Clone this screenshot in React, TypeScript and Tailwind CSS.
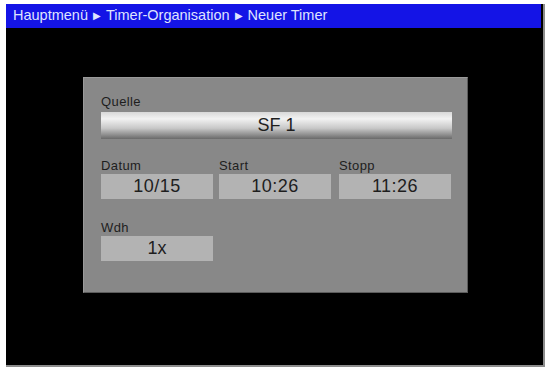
export default function App() {
  const font = { fontFamily: '"Liberation Sans", Arial, sans-serif' };
  const arrow = <span className="text-[10px] mx-[5px] relative top-[-1px]">▶</span>;
  return (
    <div className="w-[550px] h-[370px] bg-white pl-[6px] pt-[4px]" style={font}>
      <div className="w-[539px] h-[363px] bg-black border-r-[2px] border-b-[2px] border-[#8c8c8c] flex flex-col">
        <div className="h-[24px] bg-[#1414e6] flex items-center pl-[7px] mr-[2px] text-[14.5px] text-[#dfe3ff] tracking-[0px]">
          Hauptmenü{arrow}Timer-Organisation{arrow}Neuer Timer
        </div>
        <div className="pt-[49px] pl-[77px]">
          <div className="w-[385px] h-[216px] bg-[#888888] border border-[#9a9a9a] border-r-[#5c5c5c] border-b-[#5c5c5c] pl-[17px] pt-[14px] text-[#1e1e1e]">
            <div className="text-[13px] leading-[20px] tracking-[0.4px]">Quelle</div>
            <div className="w-[351px] h-[27px] bg-[linear-gradient(to_bottom,#d8d8d8_0%,#f2f2f2_25%,#c8c8c8_60%,#6a6a6a_100%)] flex items-center justify-center text-[18px]">
              SF 1
            </div>
            <div className="flex gap-[6px] mt-[18px]">
              {[
                ["Datum", "10/15", "w-[112px]"],
                ["Start", "10:26", "w-[112px]"],
                ["Stopp", "11:26", "w-[112px] ml-[2px]"],
              ].map(([label, value, w]) => (
                <div key={label} className={w}>
                  <div className="text-[13px] leading-[17px] tracking-[0.4px]">{label}</div>
                  <div className="h-[25px] bg-[#b3b3b3] flex items-center justify-center text-[18px] tracking-[0.5px]">
                    {value}
                  </div>
                </div>
              ))}
            </div>
            <div className="mt-[20px] w-[112px]">
              <div className="text-[13px] leading-[17px] tracking-[0.4px]">Wdh</div>
              <div className="h-[25px] bg-[#b3b3b3] flex items-center justify-center text-[18px]">1x</div>
            </div>
          </div>
        </div>
      </div>
    </div>
  );
}
